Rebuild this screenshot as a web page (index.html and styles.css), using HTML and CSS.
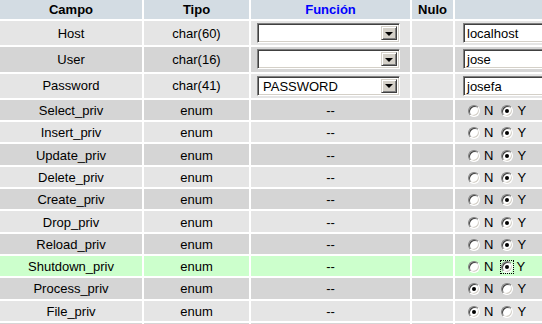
FILE: index.html
```html
<!DOCTYPE html>
<html lang="es">
<head>
<meta charset="utf-8">
<title>Usuario</title>
<link rel="stylesheet" href="styles.css">
</head>
<body>
<table class="grid">
  <colgroup>
    <col class="c-campo"><col class="c-tipo"><col class="c-func"><col class="c-nulo"><col class="c-val">
  </colgroup>
  <thead>
    <tr><th>Campo</th><th>Tipo</th><th class="link">Función</th><th>Nulo</th><th></th></tr>
  </thead>
  <tbody>
    <tr class="one inrow">
      <td>Host</td><td>char(60)</td>
      <td class="fn"><div class="sel"><span class="sel-text"></span><span class="sel-btn"><span class="tri"></span></span></div></td>
      <td></td>
      <td class="val"><div class="txt">localhost</div></td>
    </tr>
    <tr class="two inrow">
      <td>User</td><td>char(16)</td>
      <td class="fn"><div class="sel"><span class="sel-text"></span><span class="sel-btn"><span class="tri"></span></span></div></td>
      <td></td>
      <td class="val"><div class="txt">jose</div></td>
    </tr>
    <tr class="one inrow">
      <td>Password</td><td>char(41)</td>
      <td class="fn"><div class="sel"><span class="sel-text">PASSWORD</span><span class="sel-btn"><span class="tri"></span></span></div></td>
      <td></td>
      <td class="val"><div class="txt">josefa</div></td>
    </tr>
    <tr class="two en">
      <td>Select_priv</td><td>enum</td><td>--</td><td></td>
      <td class="val"><div class="rg"><span class="radio"></span><span class="lbl">N</span><span class="radio on"></span><span class="lbl">Y</span></div></td>
    </tr>
    <tr class="one en">
      <td>Insert_priv</td><td>enum</td><td>--</td><td></td>
      <td class="val"><div class="rg"><span class="radio"></span><span class="lbl">N</span><span class="radio on"></span><span class="lbl">Y</span></div></td>
    </tr>
    <tr class="two en">
      <td>Update_priv</td><td>enum</td><td>--</td><td></td>
      <td class="val"><div class="rg"><span class="radio"></span><span class="lbl">N</span><span class="radio on"></span><span class="lbl">Y</span></div></td>
    </tr>
    <tr class="one en">
      <td>Delete_priv</td><td>enum</td><td>--</td><td></td>
      <td class="val"><div class="rg"><span class="radio"></span><span class="lbl">N</span><span class="radio on"></span><span class="lbl">Y</span></div></td>
    </tr>
    <tr class="two en">
      <td>Create_priv</td><td>enum</td><td>--</td><td></td>
      <td class="val"><div class="rg"><span class="radio"></span><span class="lbl">N</span><span class="radio on"></span><span class="lbl">Y</span></div></td>
    </tr>
    <tr class="one en">
      <td>Drop_priv</td><td>enum</td><td>--</td><td></td>
      <td class="val"><div class="rg"><span class="radio"></span><span class="lbl">N</span><span class="radio on"></span><span class="lbl">Y</span></div></td>
    </tr>
    <tr class="two en">
      <td>Reload_priv</td><td>enum</td><td>--</td><td></td>
      <td class="val"><div class="rg"><span class="radio"></span><span class="lbl">N</span><span class="radio on"></span><span class="lbl">Y</span></div></td>
    </tr>
    <tr class="mark en">
      <td>Shutdown_priv</td><td>enum</td><td>--</td><td></td>
      <td class="val"><div class="rg"><span class="radio"></span><span class="lbl">N</span><span class="focusbox"><span class="radio on"></span></span><span class="lbl">Y</span></div></td>
    </tr>
    <tr class="two en">
      <td>Process_priv</td><td>enum</td><td>--</td><td></td>
      <td class="val"><div class="rg"><span class="radio on"></span><span class="lbl">N</span><span class="radio"></span><span class="lbl">Y</span></div></td>
    </tr>
    <tr class="one en">
      <td>File_priv</td><td>enum</td><td>--</td><td></td>
      <td class="val"><div class="rg"><span class="radio on"></span><span class="lbl">N</span><span class="radio"></span><span class="lbl">Y</span></div></td>
    </tr>
    <tr class="two en">
      <td></td><td></td><td></td><td></td><td></td>
    </tr>
  </tbody>
</table>
</body>
</html>
```

FILE: styles.css
```css
html, body {
  margin: 0;
  padding: 0;
  background: #ffffff;
  overflow: hidden;
}

body {
  font-family: "Liberation Sans", Arial, sans-serif;
  font-size: 13px;
  color: #000000;
}

.grid {
  table-layout: fixed;
  border-collapse: separate;
  border-spacing: 2px;
  margin: -2px 0 0 -2px;
  width: 599px;
}

.c-campo { width: 142px; }
.c-tipo { width: 105px; }
.c-func { width: 159px; }
.c-nulo { width: 41px; }
.c-val { width: 140px; }

.grid th,
.grid td {
  padding: 0;
  text-align: center;
  vertical-align: middle;
  white-space: nowrap;
  overflow: hidden;
}

.grid th {
  background: #d3dce3;
  font-weight: bold;
  height: 19px;
  line-height: 15px;
}

.grid th.link {
  color: #0000ff;
}

.one td { background: #e5e5e5; }
.two td { background: #d5d5d5; }
.mark td { background: #ccffcc; }

.inrow td { height: 24.3px; }
.grid .en td { height: 19.3px; padding-top: 1px; }

.grid td.fn,
.grid td.val {
  text-align: left;
}

/* Windows classic select */
.sel {
  display: flex;
  box-sizing: border-box;
  width: 143px;
  height: 20px;
  margin-left: 6px;
  background: #ffffff;
  border: 1px solid;
  border-color: #808080 #ffffff #ffffff #808080;
  box-shadow: inset 1px 1px 0 #404040, inset -1px -1px 0 #d4d0c8;
  padding: 2px;
}

.sel-text {
  flex: 1;
  padding-left: 3px;
  line-height: 15px;
  font-size: 13px;
  text-align: left;
}

.sel-btn {
  box-sizing: border-box;
  width: 16px;
  height: 14px;
  background: #d4d0c8;
  border: 1px solid;
  border-color: #d4d0c8 #404040 #404040 #d4d0c8;
  box-shadow: inset 1px 1px 0 #ffffff, inset -1px -1px 0 #808080;
  display: flex;
  align-items: center;
  justify-content: center;
}

.tri {
  width: 0;
  height: 0;
  border-left: 4px solid transparent;
  border-right: 4px solid transparent;
  border-top: 4px solid #000000;
  margin-top: 1px;
}

/* Windows classic text input */
.txt {
  box-sizing: border-box;
  width: 130px;
  height: 20px;
  margin-left: 8px;
  background: #ffffff;
  border: 1px solid;
  border-color: #808080 #ffffff #ffffff #808080;
  box-shadow: inset 1px 1px 0 #404040, inset -1px -1px 0 #d4d0c8;
  padding: 2px 0 0 3px;
  line-height: 15px;
  font-size: 13px;
  text-align: left;
}

/* radio groups */
.rg {
  display: flex;
  align-items: center;
  padding-left: 13px;
  height: 16px;
}

.radio {
  box-sizing: border-box;
  width: 12px;
  height: 12px;
  border-radius: 50%;
  background: #ffffff;
  border: 1px solid;
  border-color: #808080 #ffffff #ffffff #808080;
  box-shadow: inset 1px 1px 0 #404040, inset -1px -1px 0 #d4d0c8;
  display: grid;
  place-items: center;
  margin-right: 4px;
  margin-top: 1px;
}

.radio.on::after {
  content: "";
  width: 4px;
  height: 4px;
  border-radius: 50%;
  background: #000000;
}

.focusbox {
  display: flex;
  margin-right: 3px;
  margin-top: 1px;
  outline: 1px dotted #000000;
  outline-offset: 0;
}

.focusbox .radio {
  margin: 0;
}

.lbl {
  margin-right: 8px;
  line-height: 15px;
}
```
